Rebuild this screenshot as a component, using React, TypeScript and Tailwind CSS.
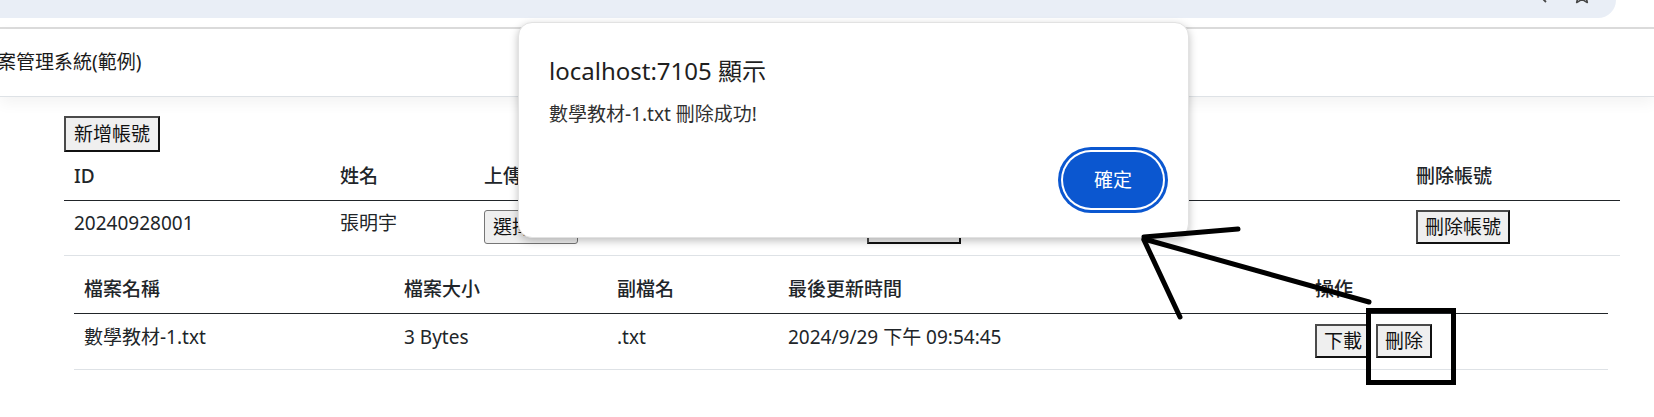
import React from "react";

const darkBtn =
  "h-[34px] px-[7px] text-[19px] leading-none bg-[#efefef] border-2 border-t-[#4a4a4a] border-l-[#4a4a4a] border-r-[#111] border-b-[#111] text-[#111] whitespace-nowrap";

function BrowserBar() {
  return (
    <div className="relative h-[27px] flex flex-col">
      <div className="h-[18px] w-[1616px] bg-[#e9eef6] rounded-br-[18px]" />
      <svg
        className="absolute left-[1533px] top-[-15px]"
        width="20"
        height="20"
        viewBox="0 0 20 20"
        fill="none"
        stroke="#474747"
        strokeWidth="1.8"
      >
        <path d="M13 3 L6 10 L13 17" />
      </svg>
      <svg
        className="absolute left-[1572px] top-[-15px]"
        width="20"
        height="20"
        viewBox="0 0 20 20"
        fill="none"
        stroke="#474747"
        strokeWidth="1.6"
        strokeLinejoin="round"
      >
        <path d="M10 1.5 L12.5 7 L18.5 7.6 L14 11.6 L15.3 17.5 L10 14.4 L4.7 17.5 L6 11.6 L1.5 7.6 L7.5 7 Z" />
      </svg>
    </div>
  );
}

function HeaderCell({ children }: { children?: React.ReactNode }) {
  return (
    <div className="pl-[10px] text-[19px] leading-[29px] font-medium text-[#212529] whitespace-nowrap">
      {children}
    </div>
  );
}

export default function App() {
  return (
    <div className="relative w-[1654px] h-[417px] overflow-hidden bg-white text-[#212529] [font-family:'Noto_Sans','Noto_Sans_CJK_TC',sans-serif]">
      <BrowserBar />
      <div className="h-[2px] bg-[#dcdcdc]" />

      <header className="h-[68px] border-b border-[#dee2e6] flex items-center shadow-[0_6px_14px_rgba(0,0,0,0.05)]">
        <span className="ml-[-22px] text-[19px] text-[#1a1a1a] whitespace-nowrap">
          檔案管理系統(範例)
        </span>
      </header>

      <main className="pl-[64px] pt-[19px]">
        <button className="h-[36px] px-[8px] text-[19px] leading-none bg-[#efefef] border-2 border-t-[#4a4a4a] border-l-[#4a4a4a] border-r-[#111] border-b-[#111] text-[#111]">
          新增帳號
        </button>

        <div className="w-[1556px]">
          {/* main header */}
          <div className="grid grid-cols-[266px_144px_383px_549px_214px] h-[49px] items-center border-b border-[#212529]">
            <HeaderCell>ID</HeaderCell>
            <HeaderCell>姓名</HeaderCell>
            <HeaderCell>上傳檔案</HeaderCell>
            <HeaderCell>上傳</HeaderCell>
            <HeaderCell>刪除帳號</HeaderCell>
          </div>

          {/* row 1 */}
          <div className="grid grid-cols-[266px_144px_383px_549px_214px] h-[55px] items-start border-b border-[#dee2e6] text-[19px]">
            <div className="pl-[10px] pt-[8px] leading-[29px]">20240928001</div>
            <div className="pl-[10px] pt-[8px] leading-[29px]">張明宇</div>
            <div className="pl-[10px] pt-[9px] flex items-center whitespace-nowrap">
              <button className="h-[34px] px-[8px] text-[19px] leading-none bg-[#efefef] border border-[#767676] rounded-[3px] text-[#111]">
                選擇檔案
              </button>
              <span className="ml-[6px] text-[19px]">未選擇任何檔案</span>
            </div>
            <div className="pl-[10px] pt-[9px]">
              <button className={darkBtn + " px-[7.5px]"}>上傳檔案</button>
            </div>
            <div className="pl-[10px] pt-[9px]">
              <button className={darkBtn}>刪除帳號</button>
            </div>
          </div>

          {/* nested files table */}
          <div className="pl-[10px] pr-[12px] pt-[10px] pb-[10px]">
            <div className="grid grid-cols-[320px_213px_171px_527px_303px] h-[48px] items-center border-b border-[#212529]">
              <HeaderCell>檔案名稱</HeaderCell>
              <HeaderCell>檔案大小</HeaderCell>
              <HeaderCell>副檔名</HeaderCell>
              <HeaderCell>最後更新時間</HeaderCell>
              <HeaderCell>操作</HeaderCell>
            </div>
            <div className="grid grid-cols-[320px_213px_171px_527px_303px] h-[56px] items-start border-b border-[#dee2e6] text-[19px]">
              <div className="pl-[10px] pt-[9px] leading-[29px] whitespace-nowrap">數學教材-1.txt</div>
              <div className="pl-[10px] pt-[9px] leading-[29px]">3 Bytes</div>
              <div className="pl-[10px] pt-[9px] leading-[29px]">.txt</div>
              <div className="pl-[10px] pt-[9px] leading-[29px] whitespace-nowrap">2024/9/29 下午 09:54:45</div>
              <div className="pl-[10px] pt-[10px] flex gap-[5px]">
                <button className={darkBtn}>下載</button>
                <button className={darkBtn}>刪除</button>
              </div>
            </div>
          </div>
        </div>
      </main>

      {/* alert dialog */}
      <div className="absolute left-[518px] top-[22px] w-[671px] h-[216px] bg-white rounded-[14px] border border-[#e2e2e2] shadow-[0_3px_9px_rgba(0,0,0,0.25)] pl-[30px] pr-[25px] pt-[33px]">
        <div className="text-[24px] leading-[30px] text-[#1f1f1f] whitespace-nowrap">localhost:7105 顯示</div>
        <div className="mt-[15px] text-[19px] leading-[26px] text-[#303030] whitespace-nowrap">
          數學教材-1.txt 刪除成功!
        </div>
        <div className="mt-[25px] flex justify-end">
          <button className="w-[100px] h-[56px] rounded-full bg-[#0b57d0] text-white text-[19px] leading-none ring-3 ring-[#0b57d0] ring-offset-2 ring-offset-white">
            確定
          </button>
        </div>
      </div>

      {/* annotation */}
      <svg className="absolute left-0 top-0 pointer-events-none" width="1654" height="417" viewBox="0 0 1654 417">
        <g stroke="#000" strokeWidth="5" strokeLinecap="round" fill="none">
          <line x1="1144" y1="237" x2="1238" y2="229" />
          <line x1="1144" y1="239" x2="1369" y2="302" />
          <line x1="1144" y1="240" x2="1180" y2="317" />
          <rect x="1368.5" y="310.5" width="85" height="72" strokeLinecap="butt" />
        </g>
      </svg>
    </div>
  );
}
